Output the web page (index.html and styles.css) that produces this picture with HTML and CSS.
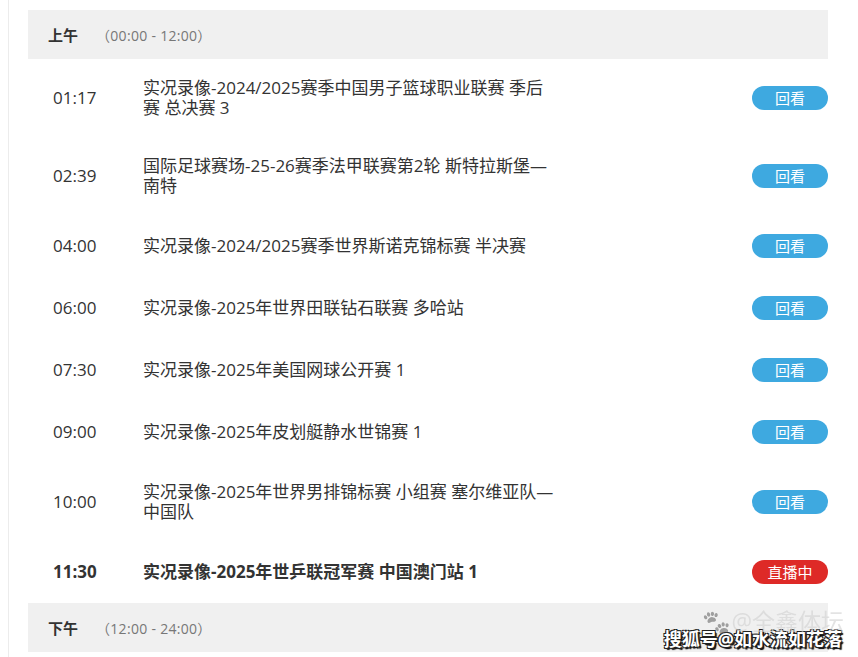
FILE: index.html
```html
<!DOCTYPE html>
<html lang="zh-CN">
<head>
    <meta charset="UTF-8">
    <meta name="viewport" content="width=device-width, initial-scale=1.0">
    <title>节目单</title>
    <link rel="stylesheet" href="styles.css">
</head>
<body>

    <div class="page">
        <div class="schedule">
            <div class="period">
                <span class="period-name">上午</span>
                <span class="period-range">（00:00 - 12:00）</span>
            </div>

            <div class="row">
                <div class="time">01:17</div>
                <div class="title">实况录像-2024/2025赛季中国男子篮球职业联赛 季后赛 总决赛 3</div>
                <a class="btn replay">回看</a>
            </div>
            <div class="row">
                <div class="time">02:39</div>
                <div class="title">国际足球赛场-25-26赛季法甲联赛第2轮 斯特拉斯堡—南特</div>
                <a class="btn replay">回看</a>
            </div>
            <div class="row">
                <div class="time">04:00</div>
                <div class="title">实况录像-2024/2025赛季世界斯诺克锦标赛 半决赛</div>
                <a class="btn replay">回看</a>
            </div>
            <div class="row">
                <div class="time">06:00</div>
                <div class="title">实况录像-2025年世界田联钻石联赛 多哈站</div>
                <a class="btn replay">回看</a>
            </div>
            <div class="row">
                <div class="time">07:30</div>
                <div class="title">实况录像-2025年美国网球公开赛 1</div>
                <a class="btn replay">回看</a>
            </div>
            <div class="row">
                <div class="time">09:00</div>
                <div class="title">实况录像-2025年皮划艇静水世锦赛 1</div>
                <a class="btn replay">回看</a>
            </div>
            <div class="row">
                <div class="time">10:00</div>
                <div class="title">实况录像-2025年世界男排锦标赛 小组赛 塞尔维亚队—中国队</div>
                <a class="btn replay">回看</a>
            </div>
            <div class="row live">
                <div class="time">11:30</div>
                <div class="title">实况录像-2025年世乒联冠军赛 中国澳门站 1</div>
                <a class="btn onair">直播中</a>
            </div>

            <div class="period">
                <span class="period-name">下午</span>
                <span class="period-range">（12:00 - 24:00）</span>
            </div>
        </div>
    </div>

    <div class="watermark">
        <span class="wm-faint">🐾@全鑫体坛</span>
        <span class="wm-main">搜狐号@如水流如花落</span>
    </div>

</body>
</html>
```

FILE: styles.css
```css
* {
    margin: 0;
    padding: 0;
    box-sizing: border-box;
}

body {
    width: 858px;
    height: 657px;
    background-color: #fff;
    font-family: 'Segoe UI', 'Open Sans', 'Noto Sans CJK SC', sans-serif;
    color: #333;
    overflow: hidden;
    position: relative;
}

.page {
    margin-left: 8px;
    height: 100%;
    border-left: 1px solid #ececec;
    padding: 10px 0 0 19px;
}

.schedule {
    width: 800px;
}

.period {
    height: 49px;
    background-color: #f0f0f0;
    display: flex;
    align-items: center;
    padding-left: 20px;
    font-size: 15px;
}

.period-name {
    font-weight: bold;
    color: #333;
    width: 48px;
}

.period-range {
    color: #777;
    font-size: 14px;
    letter-spacing: 0.3px;
}

.row {
    display: flex;
    align-items: center;
    padding: 19px 0;
    font-size: 17px;
    line-height: 20px;
}

.time {
    width: 115px;
    padding-left: 25px;
}

.title {
    width: 412px;
}

.btn {
    margin-left: auto;
    width: 76px;
    height: 24px;
    border-radius: 12px;
    color: #fff;
    font-size: 15px;
    line-height: 24px;
    text-align: center;
    cursor: pointer;
}

.replay {
    background-color: #3ea9e0;
}

.onair {
    background-color: #de2a27;
}

.live .time,
.live .title {
    font-weight: bold;
}

/* watermark over the corner */
.watermark {
    position: absolute;
    right: 16px;
    bottom: 6px;
    display: flex;
    flex-direction: column;
    align-items: flex-end;
}

.wm-faint {
    font-size: 23px;
    color: rgba(205, 205, 205, 0.7);
    line-height: 24px;
    margin-bottom: -6px;
    margin-right: -2px;
    filter: grayscale(1);
    opacity: 0.8;
}

.wm-main {
    font-size: 18px;
    font-weight: bold;
    color: #fff;
    line-height: 24px;
    text-shadow: -1px -1px 0 #222, 1px -1px 0 #222, -1px 1px 0 #222, 1px 1px 0 #222, 2px 2px 1px #000;
}
```
